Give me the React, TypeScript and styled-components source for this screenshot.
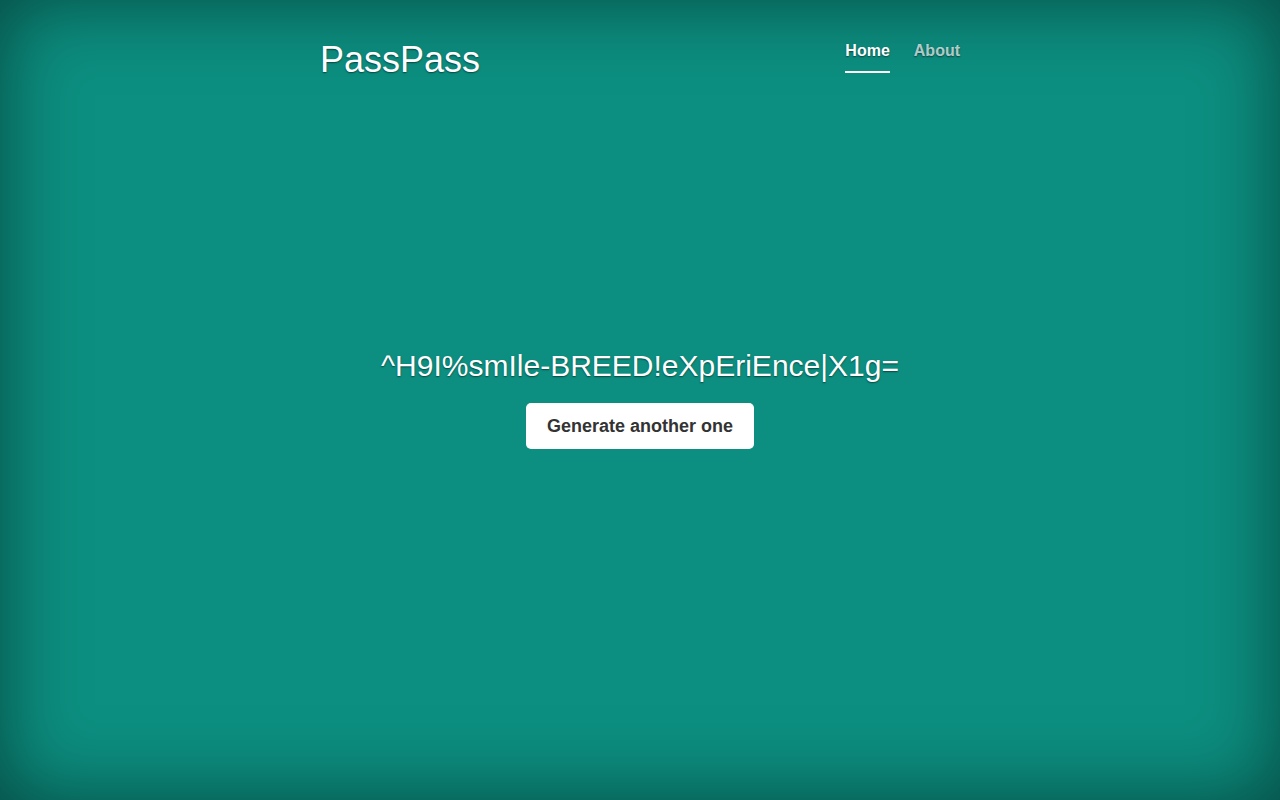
import React from "react";
import styled, { createGlobalStyle } from "styled-components";

const GlobalStyle = createGlobalStyle`
  html, body {
    margin: 0;
    padding: 0;
    height: 100%;
  }
  body {
    background-color: #0c8f80;
    color: #fff;
    font-family: "Liberation Sans", Arial, Helvetica, sans-serif;
    text-shadow: 0 0.8px 1.6px rgba(0, 0, 0, 0.5);
  }
`;

const Page = styled.div`
  min-height: 100vh;
  box-shadow: inset 0 0 80px rgba(0, 0, 0, 0.5);
  display: flex;
  justify-content: center;
`;

const Cover = styled.div`
  width: 640px;
  height: 100vh;
  display: flex;
  flex-direction: column;
`;

const Header = styled.header`
  height: 81px;
  box-sizing: border-box;
  padding-top: 38px;
  display: flex;
  justify-content: space-between;
  align-items: flex-start;
`;

const Brand = styled.h3`
  margin: 0;
  font-size: 36px;
  font-weight: 400;
  line-height: 1.2;
`;

const Nav = styled.nav`
  display: flex;
  gap: 24px;
  margin-top: 1px;
`;

const NavLink = styled.a<{ $active?: boolean }>`
  display: block;
  padding: 0 0 8px;
  font-size: 16px;
  line-height: 24px;
  font-weight: 700;
  text-decoration: none;
  color: ${(p) => (p.$active ? "#fff" : "rgba(255, 255, 255, 0.7)")};
  border-bottom: 2px solid ${(p) => (p.$active ? "#fff" : "transparent")};
  cursor: pointer;
`;

const Main = styled.main`
  flex: 1;
  display: flex;
  flex-direction: column;
  align-items: center;
  justify-content: center;
  padding-bottom: 3px;
`;

const Password = styled.p`
  margin: 0 0 19px;
  font-size: 30px;
  line-height: 1.2;
  white-space: nowrap;
`;

const Button = styled.button`
  height: 46px;
  padding: 0 21px;
  border: none;
  border-radius: 5px;
  background: #fff;
  color: #333;
  font-family: "Liberation Sans", Arial, Helvetica, sans-serif;
  font-size: 18px;
  font-weight: 700;
  text-shadow: none;
  cursor: pointer;
`;

const Footer = styled.footer`
  height: 81px;
`;

export default function App() {
  return (
    <>
      <GlobalStyle />
      <Page>
        <Cover>
          <Header>
            <Brand>PassPass</Brand>
            <Nav>
              <NavLink $active>Home</NavLink>
              <NavLink>About</NavLink>
            </Nav>
          </Header>
          <Main>
            <Password>^H9I%smIle-BREED!eXpEriEnce|X1g=</Password>
            <Button>Generate another one</Button>
          </Main>
          <Footer />
        </Cover>
      </Page>
    </>
  );
}
